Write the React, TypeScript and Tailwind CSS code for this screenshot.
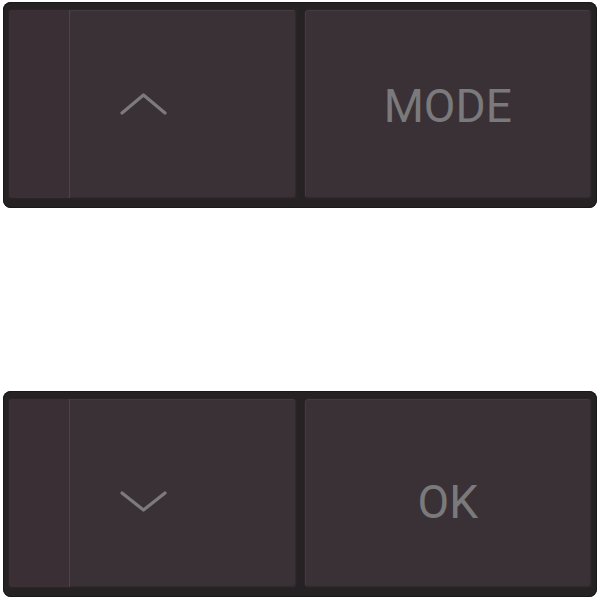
import React from "react";

function Chevron({ dir }: { dir: "up" | "down" }) {
  const d = dir === "up" ? "M2 20 L23.5 2 L45 20" : "M2 2 L23.5 19 L45 2";
  return (
    <svg width="47" height="22" viewBox="0 0 47 22" fill="none">
      <path d={d} stroke="#7c7a7c" strokeWidth="3.2" strokeLinecap="round" strokeLinejoin="round" />
    </svg>
  );
}

function Panel({ dir, label, down }: { dir: "up" | "down"; label: string; down: boolean }) {
  const shift = down ? "pt-[17px]" : "pt-[3px]";
  const chevShift = down ? "pt-[18px]" : "pt-[0px]";
  return (
    <div className="mx-[3px] h-[206px] rounded-[8px] bg-[#262123] pt-[7px] pb-[9px] px-[5px] flex gap-[7px] shadow-[inset_0_0_0_1px_#1c1819]">
      <div className="flex-1 flex rounded-[4px] bg-[#3a3136] border border-[#2a2427] shadow-[inset_1px_1px_0_#443b40,inset_-1px_-1px_0_#302a2d] overflow-hidden">
        <div className="w-[61px] bg-[#392f34] border-r border-[#4d4449]" />
        <div className={`flex-1 flex items-center ${chevShift}`}>
          <div className="ml-[50px] flex items-center">
            <Chevron dir={dir} />
          </div>
        </div>
      </div>
      <div className={`flex-1 flex items-center justify-center rounded-[4px] bg-[#3a3136] border border-[#2a2427] shadow-[inset_1px_1px_0_#443b40,inset_-1px_-1px_0_#302a2d] ${shift}`}>
        <span className="text-[46px] leading-none text-[#7a797b]" style={{ fontFamily: "Roboto, 'Liberation Sans', sans-serif" }}>
          {label}
        </span>
      </div>
    </div>
  );
}

export default function App() {
  return (
    <div className="w-[600px] h-[600px] bg-white pt-[2px] flex flex-col gap-[183px]">
      <Panel dir="up" label="MODE" down={false} />
      <Panel dir="down" label="OK" down={true} />
    </div>
  );
}
